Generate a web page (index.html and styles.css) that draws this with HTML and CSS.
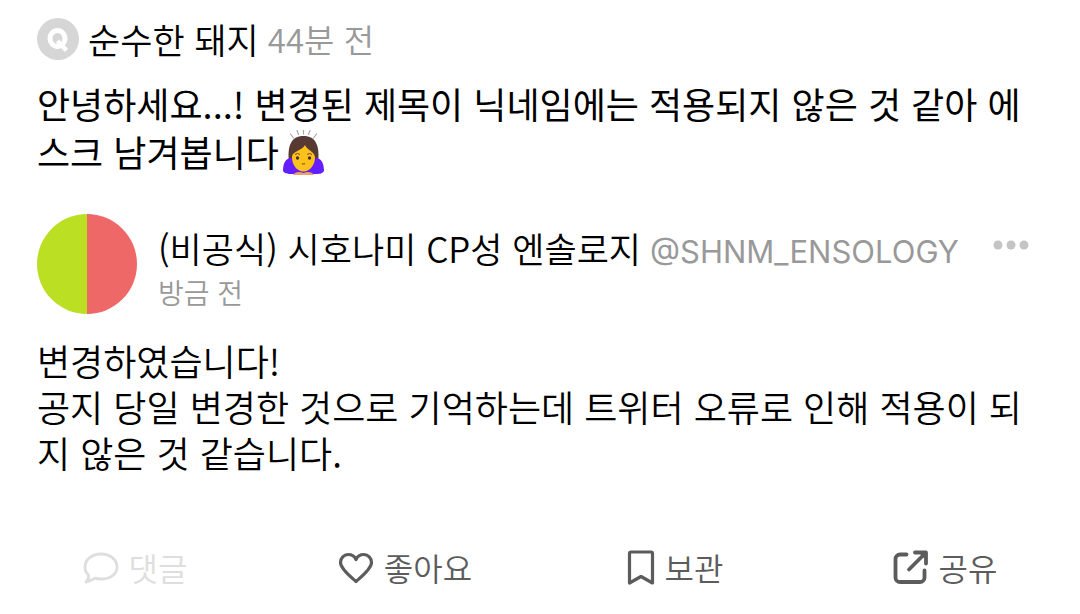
FILE: index.html
```html
<!DOCTYPE html>
<html lang="ko">
<head>
<meta charset="utf-8">
<meta name="viewport" content="width=device-width, initial-scale=1">
<title>에스크</title>
<link rel="stylesheet" href="styles.css">
</head>
<body>
<article class="post">
  <header class="asker">
    <svg class="asker-icon" viewBox="0 0 42 42" aria-hidden="true">
      <circle cx="21" cy="21" r="21" fill="#d6d6d6"/>
      <ellipse cx="20.500" cy="20.500" rx="7.500" ry="8" fill="none" stroke="#fff" stroke-width="5"/>
      <path d="M20.500 23l9 9.500" stroke="#fff" stroke-width="4.500"/>
    </svg>
    <span class="name">순수한 돼지</span>
    <time class="asked-at">44분 전</time>
  </header>
  <p class="question">안녕하세요...! 변경된 제목이 닉네임에는 적용되지 않은 것 같아 에스크 남겨봅니다<svg class="emoji" viewBox="0 0 42 46" role="img" aria-label="고개 숙여 인사하는 여자">
      <path d="M7.500 4l3 4M14 .5l1.500 4M20.500 0v4M27 .5l-1.500 4M33.500 4l-3 4" stroke="#a8a8a8" stroke-width="1.200" stroke-linecap="round"/>
      <path d="M6 33C4 16 8 6 20.500 6S37 16 35 33z" fill="#583a35"/>
      <path d="M0 41c0-8 3-13 8-13l12.500 8L33 28c5 0 8 5 8 13-2 3-5 3-9 3H9c-4 0-7 0-9-3z" fill="#651fff"/>
      <path d="M9 27c0-6 10-6 13-12 2 5 9 6 10 12 0 8-5 14.500-11.500 14.500S9 35 9 27z" fill="#fcc21b"/>
      <path d="M12 24.500q2.500-2 5 0M24 24.500q2.500-2 5 0" fill="none" stroke="#6d4c30" stroke-width="1"/>
      <circle cx="14.500" cy="28" r="1.700" fill="#4a302b"/><circle cx="26.500" cy="28" r="1.700" fill="#4a302b"/>
      <path d="M19 33.500q1.500 1 3 0" fill="none" stroke="#8a5a20" stroke-width="1.200"/>
      <path d="M10 45c2-3 6-4 10.500-2 4.500-2 8.500-1 10.500 2z" fill="#eba36c"/>
    </svg></p>
  <section class="answer">
    <header class="author">
      <span class="avatar"></span>
      <div class="author-text">
        <div class="author-line"><span class="name">(비공식) 시호나미 CP성 엔솔로지</span><a class="handle" href="#">@SHNM_ENSOLOGY</a></div>
        <time class="answered-at">방금 전</time>
      </div>
      <button class="more" type="button" aria-label="더보기">
        <svg viewBox="0 0 36 10" aria-hidden="true"><circle cx="5" cy="5" r="4.500"/><circle cx="18" cy="5" r="4.500"/><circle cx="31" cy="5" r="4.500"/></svg>
      </button>
    </header>
    <p class="reply">변경하였습니다!<br>공지 당일 변경한 것으로 기억하는데 트위터 오류로 인해 적용이 되지 않은 것 같습니다.</p>
  </section>
</article>
<footer class="actions">
  <button class="action muted" type="button">
    <svg class="icon" viewBox="0 0 36 36" aria-hidden="true"><path d="M3 33c2-2 3-4 2.500-7C3 24 2 21 2 18 2 10.500 9 5 18 5s16 5.500 16 13-7 12-16 12c-2 0-4-.2-6-.8C9.500 31 6 32.500 3 33z" stroke-width="2.800"/></svg>
    <span>댓글</span>
  </button>
  <button class="action" type="button">
    <svg class="icon" viewBox="0 0 36 36" aria-hidden="true"><path d="M18 32.500C13 28 2.500 20 2.500 13.500 2.500 9 6 5.500 10 5.500c3.500 0 6.500 1.500 8 5 1.500-3.500 4.500-5 8-5 4 0 7.500 3.500 7.500 8C33.500 20 23 28 18 32.500z" stroke-width="3.200"/></svg>
    <span>좋아요</span>
  </button>
  <button class="action" type="button">
    <svg class="icon narrow" viewBox="0 0 28 36" aria-hidden="true"><path d="M2.500 4.500q0-1.500 1.500-1.500h20q1.500 0 1.500 1.500V34L14 27.500 2.500 34z" stroke-width="3.200"/></svg>
    <span>보관</span>
  </button>
  <button class="action" type="button">
    <svg class="icon" viewBox="0 0 36 36" aria-hidden="true"><path d="M13.500 5.500H7a4.500 4.500 0 0 0-4.500 4.500v18.500a4.500 4.500 0 0 0 4.500 4.500h20a4.500 4.500 0 0 0 4.500-4.500v-7M16 20.500L31.500 5M22 3.500h11v11" stroke-width="3.800"/><path class="solid" d="M25 3h9v9z"/></svg>
    <span>공유</span>
  </button>
</footer>
</body>
</html>
```
FILE: styles.css
```css
* { box-sizing: border-box; }
body {
  margin: 0;
  background: #fff;
  color: #000;
  font-family: "Noto Sans CJK KR", "Noto Sans", sans-serif;
}
p { margin: 0; }
button {
  padding: 0;
  border: 0;
  background: none;
  font: inherit;
  color: inherit;
}
.post { padding: 16px 37px 0; }
.asker { display: flex; align-items: center; line-height: 46px; }
.asker-icon { width: 42px; height: 42px; margin-right: 9px; }
.name { font-size: 35px; font-weight: 350; }
.asked-at { margin-left: 9px; font-size: 33px; font-weight: 350; color: #999; }
.question {
  margin-top: 17px;
  padding-right: 16px;
  font-size: 36px;
  font-weight: 400;
  line-height: 48px;
}
.emoji { width: 42px; height: 46px; margin-left: 4px; vertical-align: -9px; }
.answer { margin-top: 38px; }
.author { display: flex; }
.avatar {
  flex: none;
  width: 100px;
  height: 100px;
  border-radius: 50%;
  background: linear-gradient(90deg, #badf23 50%, #ee6868 50%);
}
.author-text { flex: 1; margin: 11px 0 0 21px; }
.author-line { display: flex; align-items: baseline; line-height: 46px; white-space: nowrap; }
.handle {
  margin-left: 9px;
  font-family: Inter, "Liberation Sans", sans-serif;
  font-size: 31px;
  color: #999;
  text-decoration: none;
}
.answered-at { display: block; font-size: 28px; font-weight: 350; line-height: 34px; color: #999; }
.more { align-self: flex-start; margin-top: 26px; margin-right: 14px; }
.more svg { display: block; width: 36px; height: 10px; fill: #c4c4c4; }
.reply {
  margin-top: 23px;
  padding-right: 16px;
  font-size: 36px;
  font-weight: 350;
  line-height: 46px;
}
.actions { display: flex; margin-top: 68px; }
.action {
  flex: 1;
  display: flex;
  align-items: center;
  justify-content: center;
  gap: 10px;
  color: #5c5c5c;
  font-size: 32px;
  font-weight: 350;
  line-height: 48px;
}
.muted { color: #dedede; }
.icon { width: 36px; height: 36px; fill: none; stroke: currentColor; stroke-linecap: round; stroke-linejoin: round; }
.narrow { width: 28px; }
.solid { fill: currentColor; stroke: none; }
```
